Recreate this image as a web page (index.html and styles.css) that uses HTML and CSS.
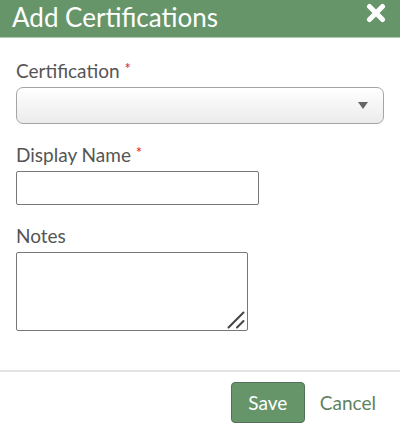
FILE: index.html
```html
<!DOCTYPE html>
<html>
<head>
<meta charset="utf-8">
<link rel="stylesheet" href="styles.css">
</head>
<body>
<div class="dialog">
  <div class="header">
    <span class="title">Add Certifications</span>
    <svg class="close" viewBox="0 0 20 20" width="20" height="20">
      <path d="M3.5 3.5 L16.5 16.5 M16.5 3.5 L3.5 16.5" stroke="#fff" stroke-width="5" stroke-linecap="round"/>
    </svg>
  </div>
  <div class="content">
    <div class="field">
      <label class="label">Certification <span class="req">*</span></label>
      <div class="select">
        <span class="arrow"></span>
      </div>
    </div>
    <div class="field">
      <label class="label">Display Name <span class="req">*</span></label>
      <div class="input"></div>
    </div>
    <div class="field">
      <label class="label">Notes</label>
      <div class="textarea">
        <svg class="grip" viewBox="0 0 18 18" width="18" height="18">
          <path d="M1.5 16.5 L16.5 1.5 M10 16.5 L16.5 10" stroke="#444" stroke-width="2" stroke-linecap="round"/>
        </svg>
      </div>
    </div>
  </div>
  <div class="footer">
    <button class="save">Save</button>
    <span class="cancel">Cancel</span>
  </div>
</div>
</body>
</html>
```
FILE: styles.css
```css
html, body {
  margin: 0;
  padding: 0;
  background: #fff;
}
.dialog {
  width: 400px;
  height: 438px;
  display: flex;
  flex-direction: column;
  font-family: Lato, "Open Sans", sans-serif;
  color: #555;
}
.header {
  height: 35px;
  padding: 2px 14px 0 12px;
  background: #66956a;
  border-bottom: 1px solid #b3c9b4;
  display: flex;
  align-items: flex-start;
  justify-content: space-between;
}
.title {
  color: #fff;
  font-size: 26px;
  line-height: 30px;
}
.close {
  margin-top: 1px;
  width: 20px;
  height: 20px;
}
.content {
  padding: 23px 16px 0 16px;
  flex: 1;
  display: flex;
  flex-direction: column;
  gap: 21px;
}
.field {
  display: flex;
  flex-direction: column;
  align-items: flex-start;
}
.label {
  font-size: 19px;
  line-height: 20px;
  margin-bottom: 6px;
  color: #555;
}
.req {
  color: #e0141e;
  font-size: 15px;
  vertical-align: top;
  line-height: 14px;
}
.select {
  width: 368px;
  height: 37px;
  box-sizing: border-box;
  border: 1px solid #a5a5a5;
  border-radius: 7px;
  background: linear-gradient(#ffffff, #ebebeb);
  position: relative;
}
.arrow {
  position: absolute;
  right: 15px;
  top: 14px;
  width: 0;
  height: 0;
  border-left: 5px solid transparent;
  border-right: 5px solid transparent;
  border-top: 7px solid #666;
}
.input {
  width: 243px;
  height: 34px;
  box-sizing: border-box;
  border: 1px solid #777;
  border-radius: 2px;
  background: #fff;
}
.textarea {
  width: 232px;
  height: 79px;
  box-sizing: border-box;
  border: 1px solid #777;
  border-radius: 2px;
  background: #fff;
  position: relative;
}
.grip {
  position: absolute;
  right: 2px;
  bottom: 1px;
}
.footer {
  border-top: 2px solid #e4e4e4;
  height: 66px;
  display: flex;
  align-items: flex-start;
  justify-content: flex-end;
  padding: 10px 24px 0 0;
  box-sizing: border-box;
  gap: 15px;
  height: 68px;
}
.save {
  width: 74px;
  height: 41px;
  background: #66956a;
  color: #fff;
  border: 1px solid #52705a;
  border-radius: 4px;
  font-family: Lato, "Open Sans", sans-serif;
  font-size: 19px;
  padding: 0;
}
.cancel {
  color: #5f8262;
  font-size: 19px;
  line-height: 41px;
}
```
